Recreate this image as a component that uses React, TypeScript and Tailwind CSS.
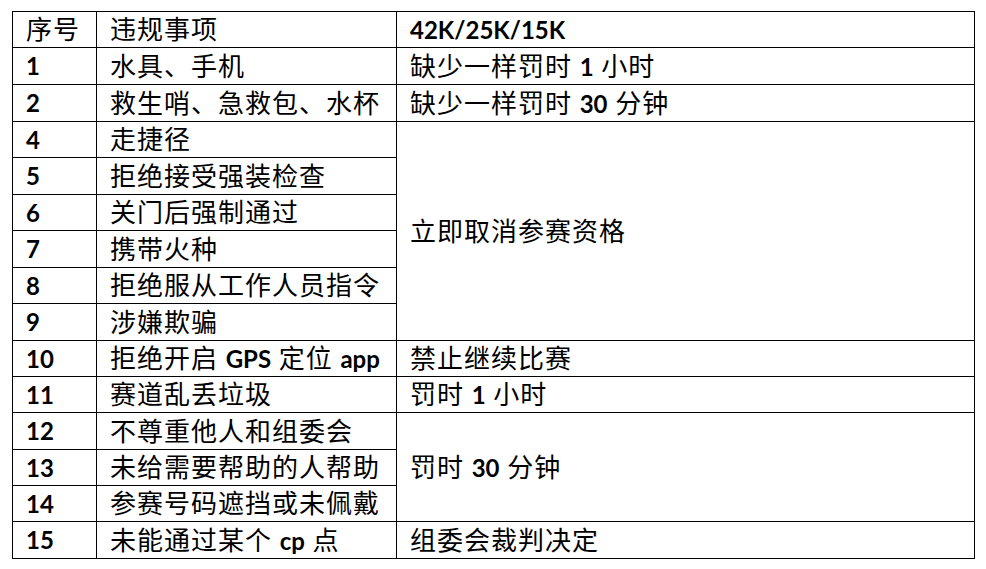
import { Fragment } from "react";

type Row = {
  no: string;
  item: React.ReactNode;
  penalty?: React.ReactNode;
  span?: number;
};

const B = ({ children }: { children: React.ReactNode }) => (
  <span className="text-[24px] font-bold tracking-normal">{children}</span>
);

const rows: Row[] = [
  { no: "1", item: "水具、手机", penalty: <>缺少一样罚时 <B>1</B> 小时</> },
  { no: "2", item: "救生哨、急救包、水杯", penalty: <>缺少一样罚时 <B>30</B> 分钟</> },
  { no: "4", item: "走捷径", penalty: "立即取消参赛资格", span: 6 },
  { no: "5", item: "拒绝接受强装检查" },
  { no: "6", item: "关门后强制通过" },
  { no: "7", item: "携带火种" },
  { no: "8", item: "拒绝服从工作人员指令" },
  { no: "9", item: "涉嫌欺骗" },
  { no: "10", item: <>拒绝开启 <B>GPS</B> 定位 <B>app</B></>, penalty: "禁止继续比赛" },
  { no: "11", item: "赛道乱丢垃圾", penalty: <>罚时 <B>1</B> 小时</> },
  { no: "12", item: "不尊重他人和组委会", penalty: <>罚时 <B>30</B> 分钟</>, span: 3 },
  { no: "13", item: "未给需要帮助的人帮助" },
  { no: "14", item: "参赛号码遮挡或未佩戴" },
  { no: "15", item: <>未能通过某个 <B>cp</B> 点</>, penalty: "组委会裁判决定" },
];

const cell = "flex items-center border-r border-b border-black pl-[13px] whitespace-pre";

export default function App() {
  return (
    <div className="min-h-screen bg-white pt-[11px] pl-[12px] text-black [font-family:Lato,'Noto_Sans_CJK_SC',sans-serif]">
      <div className="grid w-max grid-cols-[84px_300px_578px] grid-rows-[36px_37px_37px_36px_37px_36px_37px_36px_37px_36px_36px_37px_36px_36px_37px] border-l border-t border-black text-[26px] tracking-[1px]">
        <div className={`${cell} pl-[12px]`}>序号</div>
        <div className={cell}>违规事项</div>
        <div className={`${cell} text-[24px] font-bold tracking-normal`}>42K/25K/15K</div>

        {rows.map((r) => (
          <Fragment key={r.no}>
            <div className={`${cell} text-[24px] font-bold tracking-normal`}>{r.no}</div>
            <div className={cell}>
              <span>{r.item}</span>
            </div>
            {r.penalty !== undefined && (
              <div className={cell} style={r.span ? { gridRow: `span ${r.span}` } : undefined}>
                <span>{r.penalty}</span>
              </div>
            )}
          </Fragment>
        ))}
      </div>
    </div>
  );
}
